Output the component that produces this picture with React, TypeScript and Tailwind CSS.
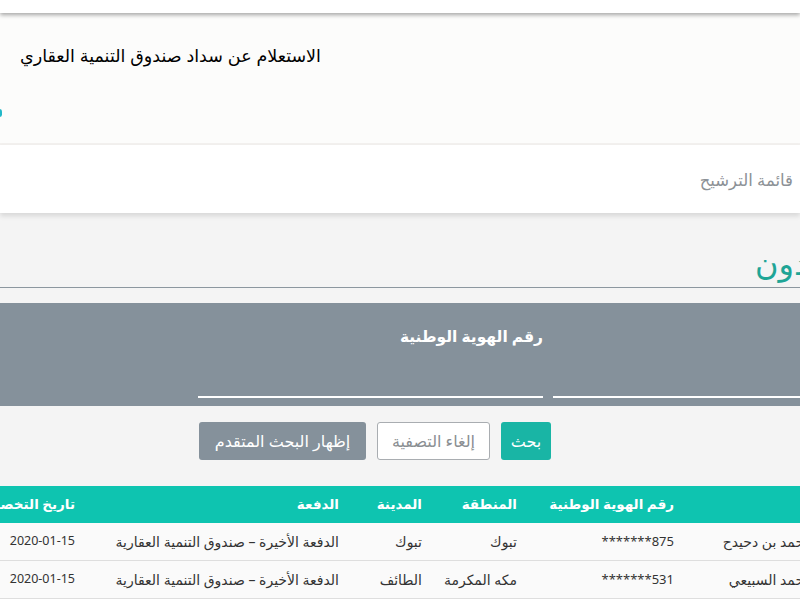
import React from "react";

const rows = [
  { name: "محمد بن دحيدح", id: "875*******", region: "تبوك", city: "تبوك", pay: "الدفعة الأخيرة – صندوق التنمية العقارية", date: "2020-01-15" },
  { name: "محمد السبيعي", id: "531*******", region: "مكه المكرمة", city: "الطائف", pay: "الدفعة الأخيرة – صندوق التنمية العقارية", date: "2020-01-15" },
];

const cols = "grid grid-cols-[174px_157px_95px_83px_264px_147px]";

export default function App() {
  return (
    <div className="w-[800px] h-[599px] overflow-hidden bg-[#f4f4f4] relative font-['Noto_Sans','DejaVu_Sans',sans-serif]">
      <div className="h-[13px] bg-white relative z-10 shadow-[0_2px_4px_rgba(0,0,0,0.35)]" />
      <div className="h-[130px] bg-[#fcfcfb] relative">
        <div dir="rtl" className="absolute left-[20px] top-[30px] text-[17.5px] text-black font-['Liberation_Sans','DejaVu_Sans',sans-serif]">
          الاستعلام عن سداد صندوق التنمية العقاري
        </div>
        <div className="absolute left-[-3px] top-[96px] w-[5px] h-[8px] rounded-full bg-[#22b8c8]" />
      </div>
      <div className="h-[2px] bg-[#f3f1ef]" />
      <div dir="rtl" className="h-[68px] bg-white flex items-center pr-[7px] pt-[2px] shadow-[0_3px_5px_rgba(0,0,0,0.12)] relative z-10">
        <span className="text-[16.5px] text-[#8c9196]">قائمة الترشيح</span>
      </div>
      <div className="h-[75px] flex items-end justify-end overflow-hidden border-b border-[#8c979f]">
        <div dir="rtl" className="mr-[-112px] mb-[4px] text-[32px] leading-[40px] text-[#1fa596] whitespace-nowrap">المستفيدون</div>
      </div>
      <div className="h-[15px]" />
      <div className="h-[103px] bg-[#85919b] overflow-hidden">
        <div dir="rtl" className="flex gap-[10px] mr-[-98px] ml-auto w-[898px] pt-[22px]">
          {["الاسم", "رقم الهوية الوطنية"].map((l) => (
            <div key={l} className="w-[345px] flex flex-col">
              <div className="text-[15.5px] font-bold text-white h-[22px] leading-[22px]">{l}</div>
              <div className="h-[49px]" />
              <div className="h-[2px] bg-white" />
            </div>
          ))}
        </div>
      </div>
      <div dir="rtl" className="flex gap-[11px] pr-[249px] pt-[16px]">
        <button className="h-[38px] w-[50px] rounded-[3px] bg-[#19b5a5] text-white text-[16px]">بحث</button>
        <button className="h-[38px] w-[113px] rounded-[3px] bg-white border border-[#a9adb1] text-[#8a8e92] text-[16px]">إلغاء التصفية</button>
        <button className="h-[38px] w-[167px] rounded-[3px] bg-[#85919b] text-white text-[16px]">إظهار البحث المتقدم</button>
      </div>
      <div dir="rtl" className="ml-[-60px] w-[920px] mt-[26px]">
        <div className={`${cols} h-[37px] bg-[#0ec4b0] text-white font-bold text-[13.5px] items-center`}>
          <div className="pr-[6px] whitespace-nowrap">الاسم</div>
          <div className="pr-3">رقم الهوية الوطنية</div>
          <div className="pr-3">المنطقة</div>
          <div className="pr-3">المدينة</div>
          <div className="pr-3">الدفعة</div>
          <div className="pr-3 whitespace-nowrap">تاريخ التخصيص</div>
        </div>
        {rows.map((r) => (
          <div key={r.id} className={`${cols} h-[38px] bg-[#fafafa] border-b border-[#dedede] text-[14px] text-[#333] items-center`}>
            <div className="pr-[48px] whitespace-nowrap">{r.name}</div>
            <div className="pr-3 text-[13px]">{r.id}</div>
            <div className="pr-3">{r.region}</div>
            <div className="pr-3">{r.city}</div>
            <div className="pr-3 whitespace-nowrap">{r.pay}</div>
            <div className="pr-3 text-[12.5px]">{r.date}</div>
          </div>
        ))}
      </div>
    </div>
  );
}
